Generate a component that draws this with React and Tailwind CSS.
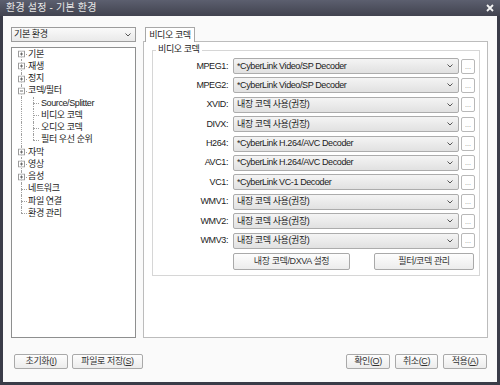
import React from 'react';

const rows = [
  ['MPEG1:', '*CyberLink Video/SP Decoder'],
  ['MPEG2:', '*CyberLink Video/SP Decoder'],
  ['XVID:', '내장 코덱 사용(권장)'],
  ['DIVX:', '내장 코덱 사용(권장)'],
  ['H264:', '*CyberLink H.264/AVC Decoder'],
  ['AVC1:', '*CyberLink H.264/AVC Decoder'],
  ['VC1:', '*CyberLink VC-1 Decoder'],
  ['WMV1:', '내장 코덱 사용(권장)'],
  ['WMV2:', '내장 코덱 사용(권장)'],
  ['WMV3:', '내장 코덱 사용(권장)'],
];

const tree = [
  { label: '기본', box: '+' },
  { label: '재생', box: '+' },
  { label: '정지', box: '+' },
  { label: '코덱/필터', box: '-' },
  { label: 'Source/Splitter', child: true },
  { label: '비디오 코덱', child: true },
  { label: '오디오 코덱', child: true },
  { label: '필터 우선 순위', child: true, lastChild: true },
  { label: '자막', box: '+' },
  { label: '영상', box: '+' },
  { label: '음성', box: '+' },
  { label: '네트워크' },
  { label: '파일 연결' },
  { label: '환경 관리', last: true },
];

function Chevron() {
  return (
    <svg width="6" height="4" viewBox="0 0 6 4" className="shrink-0">
      <polyline points="0.5,0.5 3,3 5.5,0.5" fill="none" stroke="#555" strokeWidth="1" />
    </svg>
  );
}

function ExpandBox({ sign }) {
  return (
    <svg width="7" height="7" viewBox="0 0 7 7" className="absolute left-[3px] top-1/2 -translate-y-1/2 bg-white">
      <rect x="0.5" y="0.5" width="6" height="6" fill="#fff" stroke="#9a9a9a" />
      <line x1="2" y1="3.5" x2="5" y2="3.5" stroke="#6a6a6a" />
      {sign === '+' && <line x1="3.5" y1="2" x2="3.5" y2="5" stroke="#6a6a6a" />}
    </svg>
  );
}

function TreeRow({ item, index }) {
  const first = index === 0;
  return (
    <div className="flex h-[12.25px] items-center">
      <div className="relative h-full w-[12px] shrink-0">
        <div
          className={`absolute left-[6px] border-l border-dotted border-[#a0a0a0] ${first ? 'top-1/2' : 'top-0'} ${item.last ? 'bottom-1/2' : 'bottom-0'}`}
        />
        {!item.child && <div className="absolute left-[6px] right-0 top-1/2 border-t border-dotted border-[#a0a0a0]" />}
        {item.box && <ExpandBox sign={item.box} />}
      </div>
      {item.child && (
        <div className="relative h-full w-[12px] shrink-0">
          <div className={`absolute left-[6px] top-0 border-l border-dotted border-[#a0a0a0] ${item.lastChild ? 'bottom-1/2' : 'bottom-0'}`} />
          <div className="absolute left-[6px] right-0 top-1/2 border-t border-dotted border-[#a0a0a0]" />
        </div>
      )}
      <span className={`${item.child ? 'ml-[2px]' : 'ml-[1px]'} whitespace-nowrap leading-none`}>{item.label}</span>
    </div>
  );
}

function CodecSelect({ value }) {
  return (
    <div className="flex h-[16px] w-[226px] items-center justify-between rounded-[2px] border border-[#acacac] bg-gradient-to-b from-[#f4f4f4] to-[#e1e1e1] pl-[3px] pr-[5px]">
      <span className="whitespace-nowrap leading-none">{value}</span>
      <Chevron />
    </div>
  );
}

function DotsButton() {
  return (
    <div className="flex h-[15px] w-[14px] items-end justify-center rounded-[2px] border border-[#b8b8b8] bg-white pb-[3px] text-[7px] leading-none tracking-normal text-[#888]">
      ...
    </div>
  );
}

function Btn({ children, className = '' }) {
  return (
    <div
      className={`flex items-center justify-center rounded-[2px] border border-[#a9a9a9] bg-gradient-to-b from-[#fdfdfd] to-[#ececec] leading-none text-[#333] ${className}`}
    >
      {children}
    </div>
  );
}

export default function App() {
  return (
    <div className="flex h-[385px] w-[500px] flex-col bg-[#3a3c48] font-['Liberation_Sans','Noto_Sans_CJK_KR',sans-serif] text-[9px] tracking-[-0.4px] text-[#222]">
      {/* Title bar */}
      <div className="flex h-[16px] items-center justify-between bg-gradient-to-b from-[#5c5f6f] to-[#41434f] pl-[6px] pr-[6px]">
        <span className="text-[10px] leading-none tracking-[0.2px] text-[#e8e8e8]">환경 설정 - 기본 환경</span>
        <svg width="8" height="8" viewBox="0 0 8 8">
          <path d="M1 1 L7 7 M7 1 L1 7" stroke="#f4f4f4" strokeWidth="1.8" />
        </svg>
      </div>

      {/* Body */}
      <div className="mx-[3px] mb-[3px] flex flex-1 flex-col bg-[#fafafa]">
        <div className="flex h-[322px] gap-[7px] pl-[8px] pr-[9px] pt-[11px]">
          {/* Left column */}
          <div className="flex w-[125px] flex-col gap-[5px]">
            <div className="flex h-[15px] items-center justify-between border border-[#9c9c9c] bg-gradient-to-b from-[#fafafa] to-[#e9e9e9] pl-[2px] pr-[4px]">
              <span className="leading-none">기본 환경</span>
              <Chevron />
            </div>
            <div className="flex-1 border border-[#8e8f8f] bg-white pl-[3px]">
              {tree.map((item, i) => (
                <TreeRow key={i} item={item} index={i} />
              ))}
            </div>
          </div>

          {/* Right column */}
          <div className="flex w-[345px] flex-col">
            <div className="flex">
              <div className="relative z-10 -mb-px ml-[2px] flex h-[15px] w-[50px] items-center justify-center border border-b-0 border-[#a8a8a8] bg-white leading-none">
                비디오 코덱
              </div>
            </div>
            <div className="flex-1 border border-[#bcbcbc] bg-white pl-[8px] pr-[7px] pt-[8px]">
              <div className="relative h-[226px] border border-[#d6d6d6] pt-[7px]">
                <span className="absolute -top-[6px] left-[3px] bg-white px-[2px] leading-none">비디오 코덱</span>
                <div className="flex flex-col gap-[3.4px]">
                  {rows.map(([label, value]) => (
                    <div key={label} className="flex h-[16px] items-center">
                      <span className="w-[76px] pr-[1px] text-right leading-none">{label}</span>
                      <div className="ml-[4px]">
                        <CodecSelect value={value} />
                      </div>
                      <div className="ml-[2px]">
                        <DotsButton />
                      </div>
                    </div>
                  ))}
                </div>
                <div className="mt-[4.4px] flex">
                  <Btn className="ml-[80px] h-[17px] w-[117px]">내장 코덱/DXVA 설정</Btn>
                  <Btn className="ml-[24px] h-[17px] w-[100px]">필터/코덱 관리</Btn>
                </div>
              </div>
            </div>
          </div>
        </div>

        {/* Footer */}
        <div className="flex items-center justify-between pl-[11px] pr-[10px] pt-[16px]">
          <div className="flex gap-[4px]">
            <Btn className="h-[15px] w-[54px]">
              초기화(<u>I</u>)
            </Btn>
            <Btn className="h-[15px] w-[71px]">
              파일로 저장(<u>S</u>)
            </Btn>
          </div>
          <div className="flex gap-[5px]">
            <Btn className="h-[15px] w-[44px]">
              확인(<u>O</u>)
            </Btn>
            <Btn className="h-[15px] w-[43px]">
              취소(<u>C</u>)
            </Btn>
            <Btn className="h-[15px] w-[44px]">
              적용(<u>A</u>)
            </Btn>
          </div>
        </div>
      </div>
    </div>
  );
}
